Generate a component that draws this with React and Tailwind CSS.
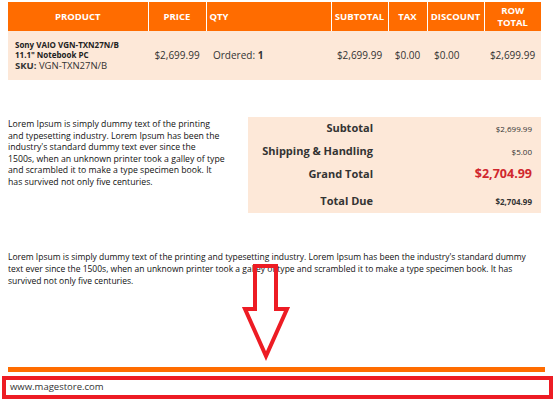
import React from 'react';

const lorem =
  "Lorem Ipsum is simply dummy text of the printing and typesetting industry. Lorem Ipsum has been the industry's standard dummy text ever since the 1500s, when an unknown printer took a galley of type and scrambled it to make a type specimen book. It has survived not only five centuries.";

// same text, broken as in the narrow note column
const loremLines = [
  "Lorem Ipsum is simply dummy text of the printing",
  "and typesetting industry. Lorem Ipsum has been the",
  "industry's standard dummy text ever since the",
  "1500s, when an unknown printer took a galley of type",
  "and scrambled it to make a type specimen book. It",
  "has survived not only five centuries.",
];

export default function App() {
  // order totals shown in the right-hand box
  const totals = [
    { label: "Subtotal", value: "$2,699.99", cls: "text-[8px] text-[#333]" },
    { label: "Shipping & Handling", value: "$5.00", cls: "text-[8px] text-[#333]" },
    { label: "Grand Total", value: "$2,704.99", cls: "text-[12.5px] font-bold text-[#d0262d]" },
    { label: "Total Due", value: "$2,704.99", cls: "text-[8px] font-bold text-[#333]" },
  ];

  return (
    <div className="relative w-[553px] h-[399px] overflow-hidden bg-white font-['Open_Sans',sans-serif] text-[#222]">
      <div className="pt-[2px] px-[8px]">
        {/* items table */}
        <table className="w-[533px] table-fixed border-collapse">
          <colgroup>
            <col className="w-[140px]" />
            <col className="w-[58px]" />
            <col className="w-[125px]" />
            <col className="w-[57px]" />
            <col className="w-[39px]" />
            <col className="w-[57px]" />
            <col className="w-[57px]" />
          </colgroup>
          <thead>
            <tr className="h-[29px] bg-[#ff6c00] text-white text-[9.5px] font-bold uppercase leading-[12px]">
              <th className="text-center">Product</th>
              <th className="text-center border-l border-white">Price</th>
              <th className="text-left pl-[3px] border-l border-white">Qty</th>
              <th className="text-center border-l border-white">Subtotal</th>
              <th className="text-center border-l border-white">Tax</th>
              <th className="text-center border-l border-white">Discount</th>
              <th className="text-center border-l border-white">Row<br />Total</th>
            </tr>
          </thead>
          <tbody>
            <tr className="h-[49px] bg-[#fde8d8] text-[10px] text-[#333]">
              <td className="pl-[7px] leading-[10.5px]">
                <div className="text-[8px] font-bold text-[#222]">Sony VAIO VGN-TXN27N/B</div>
                <div className="text-[8px] font-bold text-[#222]">11.1" Notebook PC</div>
                <div className="text-[9.5px]"><span className="font-bold">SKU:</span> VGN-TXN27N/B</div>
              </td>
              <td className="text-center">$2,699.99</td>
              <td className="pl-[7px]">Ordered: <span className="font-bold">1</span></td>
              <td className="text-center">$2,699.99</td>
              <td className="text-center">$0.00</td>
              <td className="pl-[7px]">$0.00</td>
              <td className="text-center">$2,699.99</td>
            </tr>
          </tbody>
        </table>

        {/* note + totals */}
        <div className="mt-[37px] w-[533px] flex justify-between">
          <p className="w-[225px] pt-[2px] text-[8.7px] leading-[11.6px] text-[#111] whitespace-nowrap">
            {loremLines.map((l) => (
              <span key={l} className="block">{l}</span>
            ))}
          </p>
          <div className="w-[293px] h-[96px] bg-[#fde8d8] pr-[9px]">
            {totals.map((t) => (
              <div key={t.label} className="flex items-center h-[23px] last:mt-[4px]">
                <div className="w-[125px] text-right text-[11px] font-bold text-[#333]">{t.label}</div>
                <div className={`flex-1 text-right ${t.cls}`}>{t.value}</div>
              </div>
            ))}
          </div>
        </div>

        <p className="mt-[38px] w-[520px] text-[8.5px] leading-[12px] text-[#111]">{lorem}</p>
      </div>

      {/* footer */}
      <div className="absolute left-0 right-0 bottom-0">
        <div className="mx-[8px] h-[5px] bg-[#ff6c00]" />
        <div className="mt-[4px] ml-[2px] h-[23px] border-4 border-[#ed1c24] flex items-center pl-[4px] text-[9.5px] text-[#333]">
          www.magestore.com
        </div>
      </div>

      {/* annotation arrow */}
      <svg className="absolute left-0 top-0 pointer-events-none" width="553" height="399">
        <polygon
          points="255,266 276,266 276,309 287,309 266,356 245,309 255,309"
          fill="none"
          stroke="#ed1c24"
          strokeWidth="4"
        />
      </svg>
    </div>
  );
}
